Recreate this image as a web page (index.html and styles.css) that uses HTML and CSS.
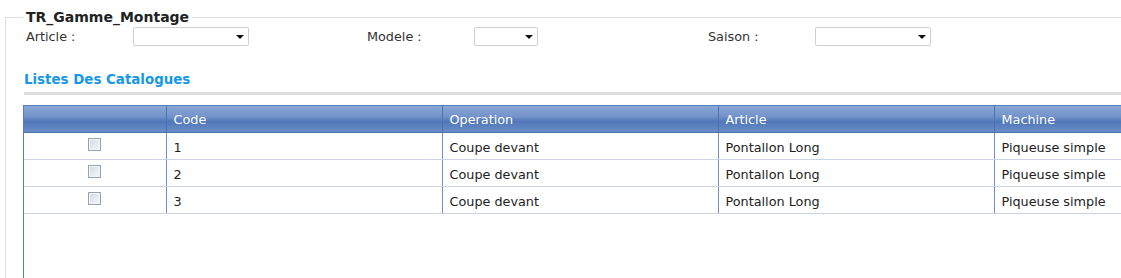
FILE: index.html
```html
<!DOCTYPE html>
<html lang="fr">
<head>
    <meta charset="UTF-8">
    <title>TR_Gamme_Montage</title>
    <link rel="stylesheet" href="styles.css">
</head>
<body>
    <fieldset class="panel">
        <legend>TR_Gamme_Montage</legend>

        <div class="filters">
            <label for="article">Article :</label>
            <span class="select-wrap wide"><select id="article"><option></option></select></span>
            <label for="modele">Modele :</label>
            <span class="select-wrap narrow"><select id="modele"><option></option></select></span>
            <label for="saison">Saison :</label>
            <span class="select-wrap wide"><select id="saison"><option></option></select></span>
        </div>

        <h2 class="section-title">Listes Des Catalogues</h2>

        <div class="grid">
            <table>
                <thead>
                    <tr>
                        <th class="col-check"></th>
                        <th>Code</th>
                        <th>Operation</th>
                        <th>Article</th>
                        <th>Machine</th>
                    </tr>
                </thead>
                <tbody>
                    <tr>
                        <td class="col-check"><input type="checkbox"></td>
                        <td>1</td>
                        <td>Coupe devant</td>
                        <td>Pontallon Long</td>
                        <td>Piqueuse simple</td>
                    </tr>
                    <tr>
                        <td class="col-check"><input type="checkbox"></td>
                        <td>2</td>
                        <td>Coupe devant</td>
                        <td>Pontallon Long</td>
                        <td>Piqueuse simple</td>
                    </tr>
                    <tr>
                        <td class="col-check"><input type="checkbox"></td>
                        <td>3</td>
                        <td>Coupe devant</td>
                        <td>Pontallon Long</td>
                        <td>Piqueuse simple</td>
                    </tr>
                </tbody>
            </table>
        </div>
    </fieldset>
</body>
</html>
```

FILE: styles.css
```css
* {
    box-sizing: border-box;
}

html, body {
    margin: 0;
    padding: 0;
    overflow: hidden;
    background: #ffffff;
}

body {
    font-family: "DejaVu Sans", Verdana, sans-serif;
    font-size: 12.8px;
    color: #333333;
    width: 1121px;
    height: 278px;
}

.panel {
    margin: 9px 0 0 5px;
    padding: 0 0 0 17px;
    border: 1px solid #dddddd;
    border-right: none;
    border-bottom: none;
    width: 1116px;
    height: 269px;
    overflow: hidden;
}

.panel legend {
    padding: 0 3px;
    font-size: 14px;
    font-weight: bold;
    color: #222222;
}

.filters {
    display: grid;
    grid-template-columns: 107px 234px 107px 234px 107px 120px;
    align-items: center;
    padding-left: 3px;
    margin-top: 2px;
    height: 19px;
}

.filters label {
    color: #333333;
}

.select-wrap {
    position: relative;
    display: block;
    height: 19px;
}

.select-wrap.wide {
    width: 116px;
}

.select-wrap.narrow {
    width: 64px;
}

.select-wrap select {
    appearance: none;
    -webkit-appearance: none;
    width: 100%;
    height: 19px;
    border: 1px solid #cfcfcf;
    border-radius: 2px;
    background: #ffffff;
    font-family: inherit;
    font-size: 12px;
}

.select-wrap::after {
    content: "";
    position: absolute;
    right: 5px;
    top: 8px;
    border-left: 4px solid transparent;
    border-right: 4px solid transparent;
    border-top: 4px solid #111111;
}

.section-title {
    margin: 26px 0 0 1px;
    padding-bottom: 4px;
    border-bottom: 3px solid #dddddd;
    font-size: 13.4px;
    font-weight: bold;
    color: #1598e6;
    line-height: 16px;
}

.grid {
    margin-top: 10px;
    height: 200px;
    border-left: 1px solid #5b7fbd;
    border-top: 1px solid #5b7fbd;
    overflow: hidden;
}

.grid table {
    border-collapse: collapse;
    width: 1246px;
    table-layout: fixed;
}

.grid th {
    height: 26px;
    padding: 1px 0 0 7px;
    text-align: left;
    font-weight: normal;
    color: #ffffff;
    background: linear-gradient(#8aa6d5 0%, #7393cb 40%, #5077b8 60%, #6b8dc9 100%);
    border-left: 1px solid #4e71af;
    border-bottom: 1px solid #4e71af;
    width: 276px;
}

.grid td {
    height: 27px;
    padding: 3px 0 0 7px;
    border-left: 1px solid #7092c8;
    border-bottom: 1px solid #c9d4e6;
    color: #222222;
}

.grid .col-check {
    width: 142px;
    border-left: none;
    padding: 0;
    text-align: center;
}

.grid td.col-check {
    padding-bottom: 4px;
}

.grid input[type="checkbox"] {
    appearance: none;
    -webkit-appearance: none;
    width: 13px;
    height: 13px;
    margin: 0;
    vertical-align: middle;
    border: 1px solid #9aa2ac;
    box-shadow: inset 0 0 0 1px #f1f4f8;
    background: linear-gradient(135deg, #d2dae6, #f6f8fb);
}
```
